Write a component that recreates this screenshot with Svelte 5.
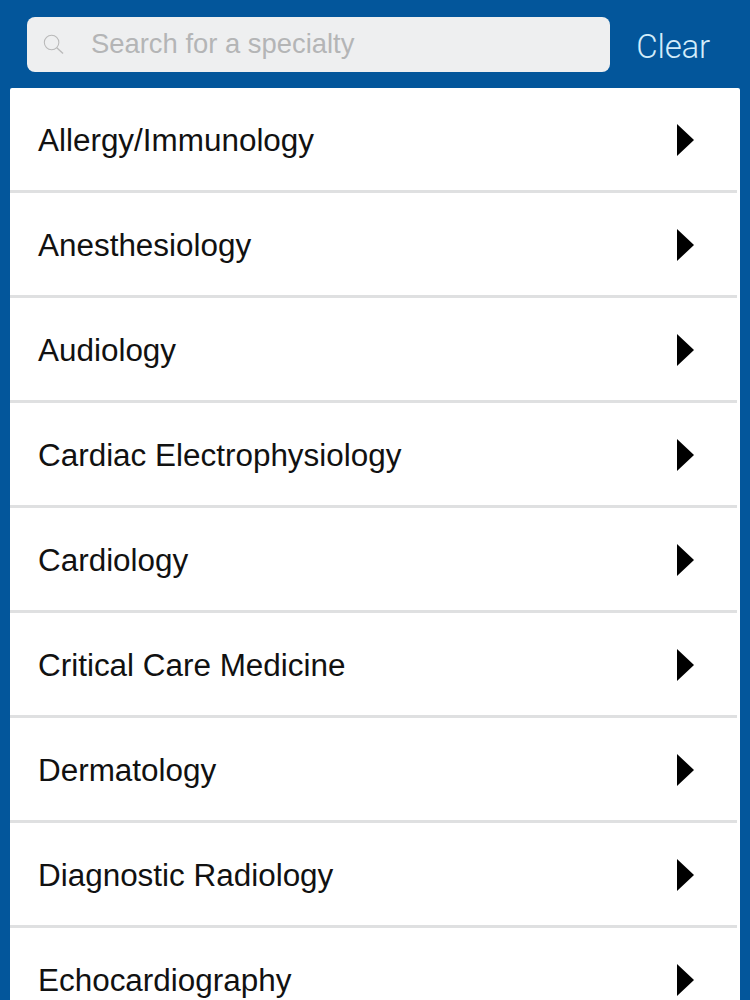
<script>
	const specialties = [
		'Allergy/Immunology',
		'Anesthesiology',
		'Audiology',
		'Cardiac Electrophysiology',
		'Cardiology',
		'Critical Care Medicine',
		'Dermatology',
		'Diagnostic Radiology',
		'Echocardiography'
	];
</script>

<div class="screen">
	<div class="search-bar">
		<div class="search-box">
			<svg class="search-icon" width="21" height="21" viewBox="0 0 22 22" fill="none" stroke="#b9b9b9">
				<circle cx="9" cy="9" r="7.6" stroke-width="1.1" />
				<path d="M14.4 14.4 L21 20.4" stroke-width="1.4" />
			</svg>
			<span class="placeholder">Search for a specialty</span>
		</div>
		<span class="clear">Clear</span>
	</div>

	<ul class="list">
		{#each specialties as name (name)}
			<li class="row">
				<span class="name">{name}</span>
				<svg class="arrow" width="17" height="32" viewBox="0 0 17 32">
					<path d="M0 0 L17 16 L0 32 Z" fill="#000" />
				</svg>
			</li>
		{/each}
	</ul>
</div>

<style>
	:global(body) {
		margin: 0;
		background: #03569b;
	}

	.screen {
		width: 750px;
		height: 1000px;
		overflow: hidden;
		background: #03569b;
		font-family: 'Liberation Sans', Arial, sans-serif;
	}

	.search-bar {
		display: flex;
		align-items: center;
		justify-content: space-between;
		height: 88px;
		padding: 0 40px 0 27px;
		box-sizing: border-box;
	}

	.search-box {
		display: flex;
		align-items: center;
		width: 583px;
		height: 55px;
		margin-top: 1px;
		padding-left: 16px;
		box-sizing: border-box;
		background: #eeeff0;
		border-radius: 8px;
	}

	.search-icon {
		flex: none;
	}

	.placeholder {
		margin-left: 27px;
		margin-bottom: 2px;
		font-size: 27.4px;
		color: #b4b5b6;
	}

	.clear {
		margin-top: 4px;
		font-family: Roboto, sans-serif;
		font-weight: 300;
		font-size: 33px;
		letter-spacing: -0.2px;
		color: #d3ecfa;
	}

	.list {
		list-style: none;
		margin: 0 10px;
		padding: 0;
		background: #fff;
		border-radius: 2px 2px 0 0;
	}

	.row {
		display: flex;
		align-items: center;
		justify-content: space-between;
		height: 102px;
		margin-right: 3px;
		padding: 0 43px 0 28px;
		border-bottom: 3px solid #dfe0e1;
	}

	.name {
		padding-top: 4px;
		font-size: 31.45px;
		color: #111;
	}

	.arrow {
		flex: none;
		margin-top: 2px;
	}
</style>
